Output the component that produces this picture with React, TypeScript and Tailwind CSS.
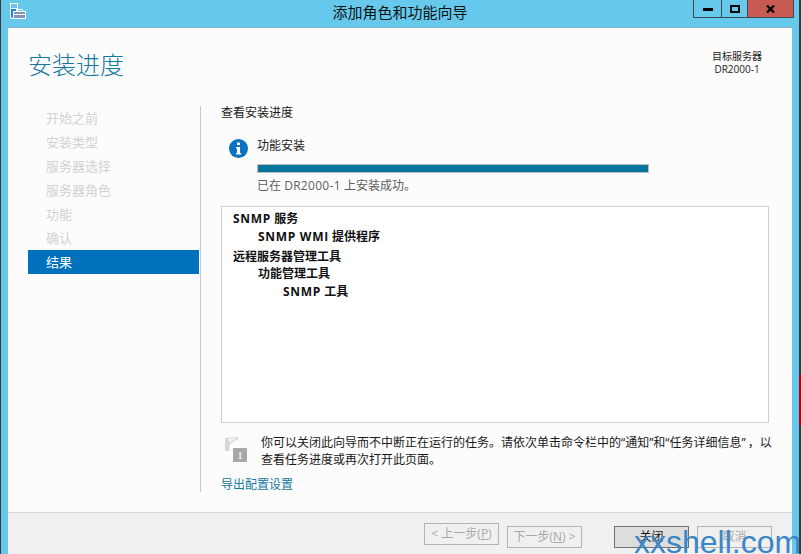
const steps = ["开始之前", "安装类型", "服务器选择", "服务器角色", "功能", "确认"];

function AppIcon() {
  return (
    <svg width="16" height="16" viewBox="0 0 16 16" fill="none">
      <rect x="0.5" y="0.5" width="7" height="14.5" fill="#1f86d8" stroke="#fff" />
      <rect x="1" y="1" width="6" height="4" fill="#6cc4ee" />
      <path d="M1 5.5h6" stroke="#fff" />
      <rect x="3.5" y="8.5" width="12" height="7" fill="#7f97b4" stroke="#fff" />
      <path d="M6.5 8.5V6.5h6v2M4 11.5h11" stroke="#fff" />
    </svg>
  );
}

function InfoIcon() {
  return (
    <svg width="19" height="19" viewBox="0 0 19 19">
      <circle cx="9.5" cy="9.5" r="9.5" fill="#0b72c1" />
      <rect x="8" y="3.5" width="3" height="2.6" fill="#fff" />
      <path d="M7 8h4v6h1.2v1.6H7V14h1V9.6H7z" fill="#fff" />
    </svg>
  );
}

function FlagIcon() {
  return (
    <svg width="23" height="26" viewBox="0 0 23 26">
      <path d="M0 1L13 0V2L5 7L4 14H0z" fill="#d6d6d6" />
      <path d="M3 1.5L12 0.8L4.5 6z" fill="#f0f0f0" />
      <rect x="8" y="11" width="14" height="14" fill="#a8a8a8" />
      <text x="15" y="22" textAnchor="middle" fontSize="10" fontWeight="700" fontFamily="Liberation Serif, serif" fill="#eeeeee">
        1
      </text>
    </svg>
  );
}

function WizardButton({ label, hotkey, before, after, primary }: { label: string; hotkey?: string; before?: string; after?: string; primary?: boolean }) {
  return (
    <button
      type="button"
      className={
        primary
          ? "w-[75px] h-[22px] border border-[#707070] bg-[#dddddd] text-[12px] leading-[20px] text-[#1a1a1a]"
          : "w-[75px] h-[22px] border border-[#b4b4b4] bg-[#f0f0f0] text-[12px] leading-[20px] text-[#a8a8a8]"
      }
    >
      {before}
      {label}
      {hotkey && (
        <>
          (<span className="underline">{hotkey}</span>)
        </>
      )}
      {after}
    </button>
  );
}

export default function App() {
  return (
    <div className="relative w-[801px] h-[554px] overflow-hidden flex flex-col bg-[#66c9ec] font-['Open_Sans','Noto_Sans_CJK_SC',sans-serif]">
      {/* title bar */}
      <div className="h-[27px] shrink-0 grid grid-cols-[1fr_auto_1fr] border-l border-[#3a3a3a] border-r-2 border-r-[#3a3a3a]">
        <div className="pl-[9px] pt-[3px]">
          <AppIcon />
        </div>
        <div className="text-[15px] leading-[24px] text-[#111111]">添加角色和功能向导</div>
        <div className="flex justify-end pr-[5px]">
          <div className="flex h-[18px] border border-t-0 border-[#3b4a52]">
            <div className="w-[28px] flex items-center justify-center border-r border-[#3b4a52]">
              <div className="w-[10px] h-[3px] mt-[2px] bg-black" />
            </div>
            <div className="w-[26px] flex items-center justify-center border-r border-[#3b4a52]">
              <div className="w-[10px] h-[8px] border-2 border-black" />
            </div>
            <div className="w-[45px] bg-[#c75a52] flex items-center justify-center">
              <svg width="9" height="8" viewBox="0 0 9 8">
                <path d="M1 0.5L8 7.5M8 0.5L1 7.5" stroke="#000" strokeWidth="2.2" />
              </svg>
            </div>
          </div>
        </div>
      </div>

      <div className="flex-1 flex min-h-0">
        <div className="w-[8px] shrink-0 border-l border-[#3a3a3a]" />

        {/* window body */}
        <div className="w-[784px] shrink-0 flex flex-col bg-[#fcfcfc] border-t border-[#8ab4c6]">
          <div className="flex-1 min-h-0 flex flex-col">
            <div className="h-[78px] shrink-0 flex justify-between pl-[20px] pr-[30px]">
              <h1 className="pt-[19px] text-[24px] leading-[36px] font-light text-[#14789f]">安装进度</h1>
              <div className="pt-[22px] text-center text-[10px] leading-[13px] text-[#1a1a1a]">
                <div>目标服务器</div>
                <div>DR2000-1</div>
              </div>
            </div>

            <div className="flex h-[386px]">
              {/* step list */}
              <div className="w-[192px] shrink-0 pl-[20px]">
                {steps.map((s) => (
                  <div key={s} className="h-[24px] w-[171px] pl-[18px] text-[13px] leading-[24px] text-[#d2d2d2]">
                    {s}
                  </div>
                ))}
                <div className="h-[24px] w-[171px] pl-[18px] text-[13px] leading-[24px] text-white bg-[#0072bc]">结果</div>
              </div>
              <div className="w-px shrink-0 bg-[#c8c8c8]" />

              {/* main panel */}
              <div className="w-[548px] ml-[20px] text-[12px] text-[#1a1a1a]">
                <div className="leading-[14px]">查看安装进度</div>
                <div className="flex mt-[12px] pl-[8px]">
                  <div className="pt-[7px] shrink-0">
                    <InfoIcon />
                  </div>
                  <div className="ml-[9px]">
                    <div className="leading-[16px] pt-[6px]">功能安装</div>
                    <div className="mt-[10px] w-[392px] h-[9px] border border-[#bcbcbc] bg-[#04759c]" />
                    <div className="mt-[5px] leading-[16px] text-[#5e5e5e]">
                      已在 <span className="tracking-[0.3px]">DR2000-1</span> 上安装成功。
                    </div>
                  </div>
                </div>

                <div className="mt-[12px] h-[217px] border border-[#cfcfcf] bg-white pl-[11px] pt-[3px] font-bold text-[#111111]">
                  <div className="leading-[18px]">
                    <span className="tracking-[0.7px]">SNMP</span> 服务
                  </div>
                  <div className="leading-[18px] pl-[25px]">
                    <span className="tracking-[0.7px]">SNMP WMI</span> 提供程序
                  </div>
                  <div className="leading-[18px] mt-[2px]">远程服务器管理工具</div>
                  <div className="leading-[18px] mt-[-1px] pl-[25px]">功能管理工具</div>
                  <div className="leading-[18px] pl-[50px]">
                    <span className="tracking-[0.7px]">SNMP</span> 工具
                  </div>
                </div>

                <div className="flex mt-[11px] pl-[4px]">
                  <div className="w-[36px] shrink-0 pt-[3px]">
                    <FlagIcon />
                  </div>
                  <p className="leading-[17px] text-[#1a1a1a] whitespace-nowrap">
                    你可以关闭此向导而不中断正在运行的任务。请依次单击命令栏中的“通知”和“任务详细信息”<span className="ml-[2px]">，以</span>
                    <br />
                    查看任务进度或再次打开此页面。
                  </p>
                </div>
                <a className="block mt-[9px] leading-[16px] text-[#14789f]">导出配置设置</a>
              </div>
            </div>
          </div>

          {/* footer */}
          <div className="h-[42px] shrink-0 bg-[#f0f0f0] border-t border-[#d8d8d8] flex justify-end items-start pt-[10px] pr-[20px]">
            <WizardButton before="< " label="上一步" hotkey="P" />
            <div className="ml-[8px]">
              <WizardButton label="下一步" hotkey="N" after=" >" />
            </div>
            <div className="ml-[32px]">
              <WizardButton label="关闭" primary />
            </div>
            <div className="ml-[8px]">
              <WizardButton label="取消" />
            </div>
          </div>
        </div>

        <div className="flex-1 border-r-2 border-[#3a3a3a]" />
      </div>

      {/* red sliver of the window behind */}
      <div className="absolute right-0 top-[375px] w-[2px] h-[50px] bg-[#c00000]" />

      {/* watermark */}
      <div className="absolute left-[634px] top-[524px] font-['Liberation_Sans',sans-serif] text-[32px] leading-[37px] whitespace-nowrap text-[#3a86c8]">
        xxshell.com
      </div>
    </div>
  );
}
